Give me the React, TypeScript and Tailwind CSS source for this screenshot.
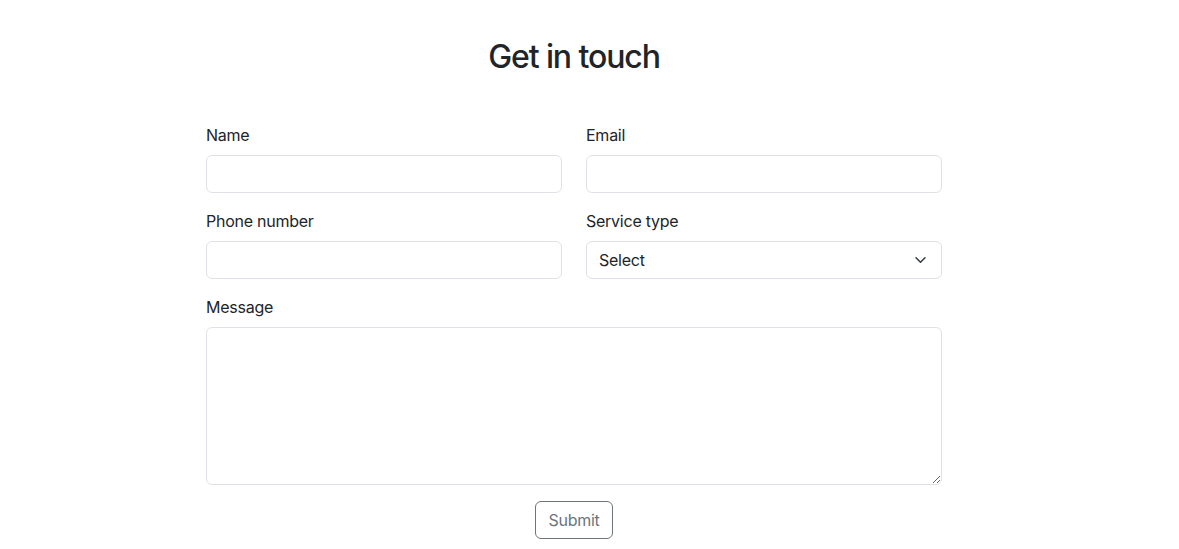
import React from "react";

const font = { fontFamily: 'Inter, "Liberation Sans", sans-serif' };

function Field({ label, children }: { label: string; children: React.ReactNode }) {
  return (
    <div className="flex flex-col mb-4">
      <label className="text-[16px] leading-6 text-[#212529] mb-2 tracking-[-0.25px]">{label}</label>
      {children}
    </div>
  );
}

const inputCls =
  "h-[38px] w-full rounded-[6px] border border-[#dee2e6] bg-white px-3 text-[16px] text-[#212529] outline-none";

export default function App() {
  return (
    <div className="min-h-[549px] bg-white font-['Inter','Liberation_Sans',sans-serif]" style={font}>
      <div className="ml-[206px] w-[736px] pt-[38px]">
        <h2 className="text-center text-[32px] leading-[38px] font-medium tracking-[-1.1px] text-[#212529] mb-[47px]">
          Get in touch
        </h2>
        <form className="flex flex-col">
          <div className="grid grid-cols-2 gap-x-6">
            <Field label="Name">
              <input className={inputCls} />
            </Field>
            <Field label="Email">
              <input className={inputCls} />
            </Field>
            <Field label="Phone number">
              <input className={inputCls} />
            </Field>
            <Field label="Service type">
              <div className="relative">
                <select className={inputCls + " appearance-none tracking-[-0.25px]"} defaultValue="">
                  <option value="">Select</option>
                </select>
                <svg
                  className="pointer-events-none absolute right-[15px] top-[13px]"
                  width="13"
                  height="12"
                  viewBox="0 0 16 16"
                  fill="none"
                  stroke="#343a40"
                  strokeWidth="2"
                  strokeLinecap="round"
                  strokeLinejoin="round"
                >
                  <path d="M2 5l6 6 6-6" />
                </svg>
              </div>
            </Field>
          </div>
          <Field label="Message">
            <textarea className="h-[158px] w-full rounded-[6px] border border-[#dee2e6] bg-white px-3 py-1.5 text-[16px] outline-none resize-y" />
          </Field>
          <div className="flex justify-center">
            <button
              type="button"
              className="h-[38px] w-[78px] rounded-[6px] border border-[#6c757d] text-[16px] text-[#6c757d] bg-white tracking-[-0.25px]"
            >
              Submit
            </button>
          </div>
        </form>
      </div>
    </div>
  );
}
